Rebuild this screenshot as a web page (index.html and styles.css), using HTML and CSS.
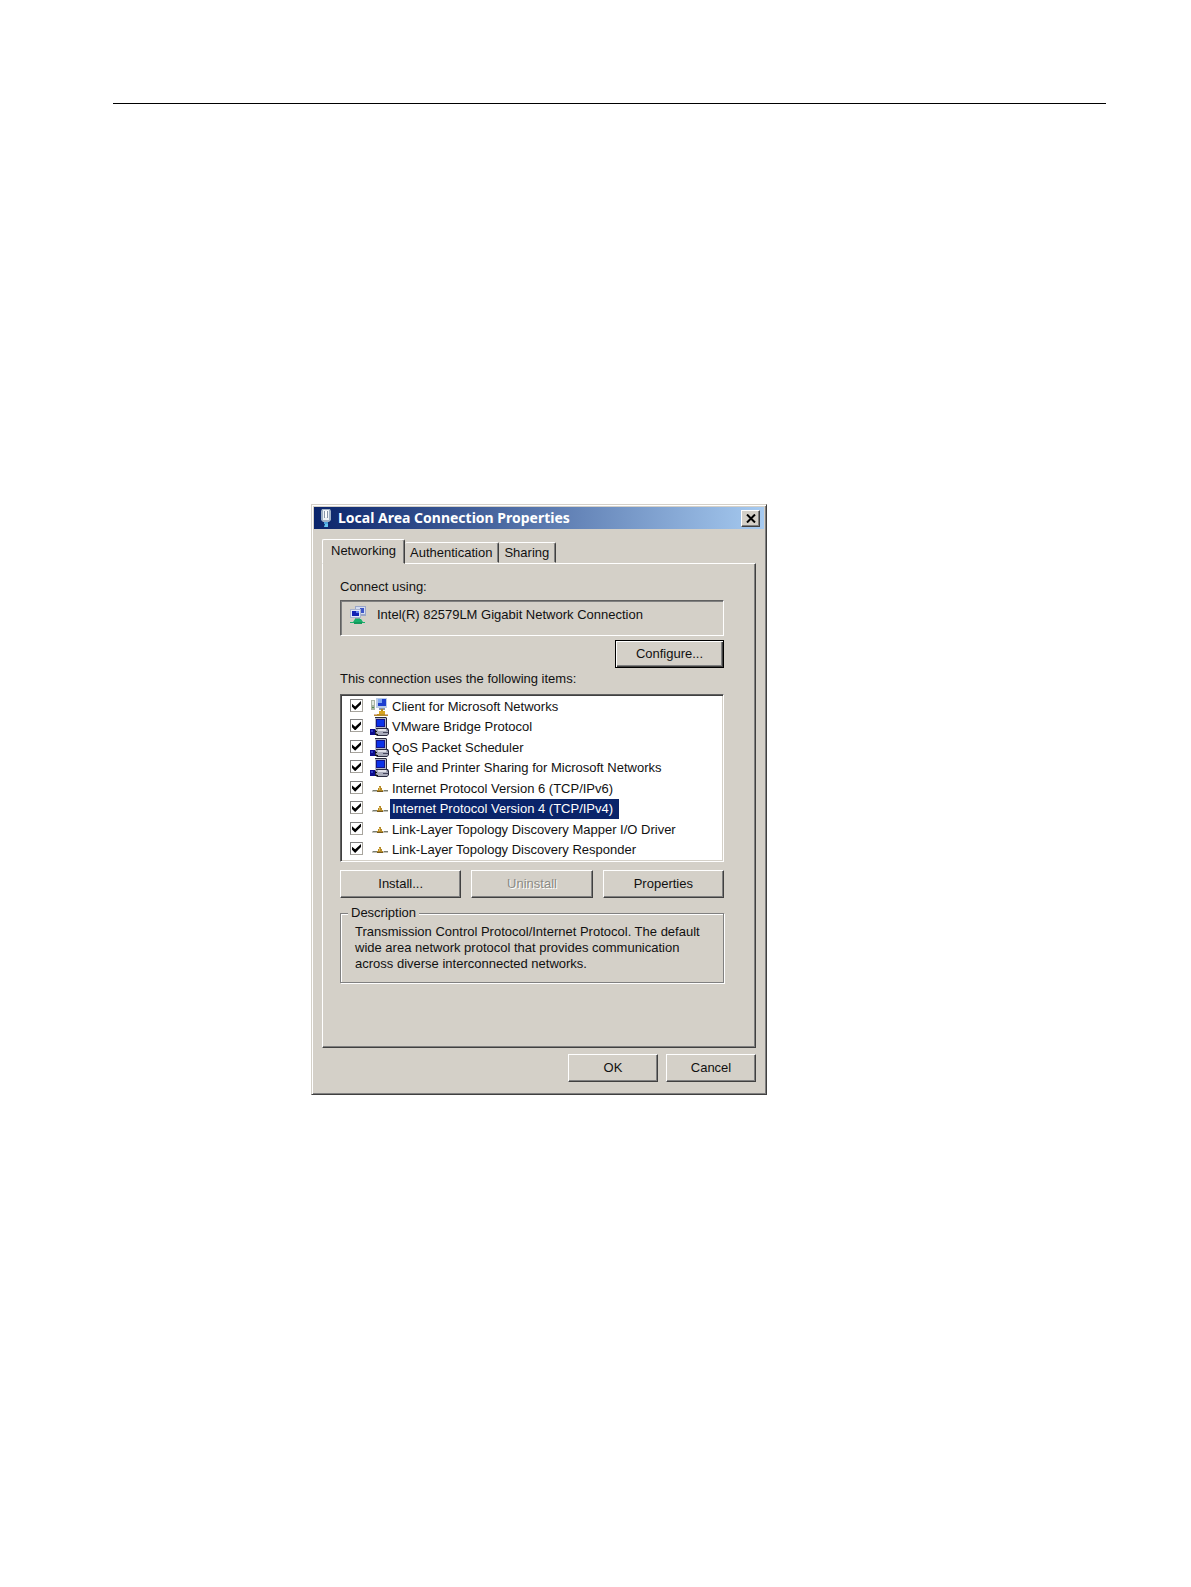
FILE: index.html
```html
<!DOCTYPE html>
<html lang="en">
<head>
    <meta charset="UTF-8">
    <meta name="viewport" content="width=device-width, initial-scale=1.0">
    <title>Local Area Connection Properties</title>
    <link rel="stylesheet" href="styles.css">
</head>
<body>

    <!-- Shared icons -->
    <svg class="sprite" aria-hidden="true">
        <symbol id="icon-client" viewBox="0 0 20 20">
            <path d="M1 3h4v10H1z" fill="#a9b5a6"/>
            <path d="M2 4h2v4H2z" fill="#dfe7dc"/>
            <path d="M2 10h2v1H2z" fill="#4f8a4a"/>
            <path d="M6 1h11v10H6z" fill="#b9cbe6"/>
            <path d="M8 2h8v7H8z" fill="#1d3fd0"/>
            <path d="M8 2h4v4H8z" fill="#7fa6f2"/>
            <path d="M9 11h6v2H9z" fill="#8f98a8"/>
            <path d="M11 12h2v3h-2z" fill="#b08a1e"/>
            <path d="M9 14h6v3H9z" fill="#d9a520"/>
            <path d="M4 17h14v2H4z" fill="#b98f2c"/>
            <path d="M4 17h3v1H4zM15 17h3v1h-3z" fill="#d8b0a0"/>
        </symbol>
        <symbol id="icon-service" viewBox="0 0 20 20">
            <path d="M5 0h11l1 1v10h1l1 2v4l-2 2H7l-2-2v-4l1-1-1-2z" fill="#2b2b40"/>
            <path d="M5 1h11v10H5z" fill="#b4b8c6"/>
            <path d="M6 2h9v8H6z" fill="#15158a"/>
            <path d="M7 3h7v6H7z" fill="#0b32e8"/>
            <path d="M6 12h11l1 2v3l-1 1H8l-2-2z" fill="#a9abba"/>
            <path d="M8 12h8v2H8z" fill="#e2e2ea"/>
            <path d="M13 15h5v1h-5z" fill="#44445c"/>
            <path d="M0 12h5v6H0z" fill="#0c0c8c"/>
            <path d="M1 13h2v2H1z" fill="#3340c8"/>
            <path d="M5 14h2v1H5zM5 17h3v1H5z" fill="#111"/>
        </symbol>
        <symbol id="icon-protocol" viewBox="0 0 20 20">
            <path d="M2 11h16v2H2z" fill="#c3c4bd"/>
            <path d="M3 11h4v1H3zM14 11h4v1h-4z" fill="#777b70"/>
            <path d="M9 7h2v2h1v2h1v2H7v-2h1V9h1z" fill="#b58a28"/>
            <path d="M9 8h1v3H9z" fill="#e2bb55"/>
            <path d="M7 12h6v1H7z" fill="#75571a"/>
        </symbol>
    </svg>

    <main class="page">
        <hr class="rule">

        <section class="dialog" role="dialog" aria-labelledby="dialog-title">
            <header class="titlebar">
                <svg class="title-icon" viewBox="0 0 12 20" aria-hidden="true">
                    <path d="M2 1h8l1 2v9l-2 2H3l-2-2V3z" fill="#9fb0c4"/>
                    <path d="M3 2h6v10H3z" fill="#eef2f6"/>
                    <path d="M4 3h1v7H4zM7 3h1v7H7z" fill="#8795a8"/>
                    <path d="M5 3h2v6H5z" fill="#fff"/>
                    <path d="M4 14h4v2H4z" fill="#4ba3dc"/>
                    <path d="M5 16h3v3H4z" fill="#62c4f0"/>
                </svg>
                <h1 class="title" id="dialog-title">Local Area Connection Properties</h1>
                <button type="button" class="btn close" aria-label="Close">
                    <svg viewBox="0 0 10 9" aria-hidden="true">
                        <path d="M1 0.5L9 8.5M9 0.5L1 8.5" stroke="#000" stroke-width="2" fill="none"/>
                    </svg>
                </button>
            </header>

            <div class="content">
                <div class="tabs" role="tablist">
                    <button type="button" class="tab active" role="tab" aria-selected="true">Networking</button>
                    <button type="button" class="tab" role="tab" aria-selected="false">Authentication</button>
                    <button type="button" class="tab" role="tab" aria-selected="false">Sharing</button>
                </div>

                <div class="panel" role="tabpanel">
                    <p class="label">Connect using:</p>
                    <div class="adapter">
                        <svg class="adapter-icon" viewBox="0 0 18 20" aria-hidden="true">
                            <path d="M6 1h11v10H6z" fill="#9aa6c8"/>
                            <path d="M7 2h9v7H7z" fill="#d3dcf2"/>
                            <path d="M11 3h4v5h-4z" fill="#3c55c8"/>
                            <path d="M1 4h11v9H1z" fill="#a9b3cf"/>
                            <path d="M2 5h9v7H2z" fill="#e3e9f7"/>
                            <path d="M3 6h7v5H3z" fill="#1322b4"/>
                            <path d="M7 6h3v2H7z" fill="#6484ee"/>
                            <path d="M6 13h5v2H6z" fill="#6fa79a"/>
                            <path d="M6 14h6l2 3h2v1H1v-1h3z" fill="#18b06c"/>
                            <path d="M5 17h8v2H5z" fill="#139a5c"/>
                        </svg>
                        <span>Intel(R) 82579LM Gigabit Network Connection</span>
                    </div>
                    <button type="button" class="btn configure">Configure...</button>

                    <p class="label">This connection uses the following items:</p>
                    <ul class="items">
                        <li><input type="checkbox" id="item1" checked><label for="item1"><svg><use href="#icon-client"/></svg><span>Client for Microsoft Networks</span></label></li>
                        <li><input type="checkbox" id="item2" checked><label for="item2"><svg><use href="#icon-service"/></svg><span>VMware Bridge Protocol</span></label></li>
                        <li><input type="checkbox" id="item3" checked><label for="item3"><svg><use href="#icon-service"/></svg><span>QoS Packet Scheduler</span></label></li>
                        <li><input type="checkbox" id="item4" checked><label for="item4"><svg><use href="#icon-service"/></svg><span>File and Printer Sharing for Microsoft Networks</span></label></li>
                        <li><input type="checkbox" id="item5" checked><label for="item5"><svg><use href="#icon-protocol"/></svg><span>Internet Protocol Version 6 (TCP/IPv6)</span></label></li>
                        <li class="selected"><input type="checkbox" id="item6" checked><label for="item6"><svg><use href="#icon-protocol"/></svg><span>Internet Protocol Version 4 (TCP/IPv4)</span></label></li>
                        <li><input type="checkbox" id="item7" checked><label for="item7"><svg><use href="#icon-protocol"/></svg><span>Link-Layer Topology Discovery Mapper I/O Driver</span></label></li>
                        <li><input type="checkbox" id="item8" checked><label for="item8"><svg><use href="#icon-protocol"/></svg><span>Link-Layer Topology Discovery Responder</span></label></li>
                    </ul>

                    <div class="actions">
                        <button type="button" class="btn">Install...</button>
                        <button type="button" class="btn" disabled>Uninstall</button>
                        <button type="button" class="btn">Properties</button>
                    </div>

                    <fieldset class="description">
                        <legend>Description</legend>
                        <p>Transmission Control Protocol/Internet Protocol. The default wide area network protocol that provides communication across diverse interconnected networks.</p>
                    </fieldset>
                </div>

                <footer class="footer">
                    <button type="button" class="btn">OK</button>
                    <button type="button" class="btn">Cancel</button>
                </footer>
            </div>
        </section>
    </main>

</body>
</html>
```
FILE: styles.css
```css
* {
    box-sizing: border-box;
}

body {
    margin: 0;
    background: #fff;
    color: #111;
    font-family: "Liberation Sans", Arial, sans-serif;
    font-size: 13px;
    line-height: 16px;
}

p, h1, ul {
    margin: 0;
    padding: 0;
}

button {
    font: inherit;
    color: inherit;
}

.sprite {
    display: none;
}

.page {
    padding: 103px 85px 80px 113px;
}

.rule {
    margin: 0 0 400px;
    border: 0;
    border-top: 1px solid #000;
}

/* Dialog window */
.dialog {
    max-width: 456px;
    margin-left: 198px;
    padding: 2px;
    background: #d4d0c8;
    border: 1px solid;
    border-color: #d4d0c8 #404040 #404040 #d4d0c8;
    box-shadow: inset 1px 1px #fff, inset -1px -1px #808080;
}

.titlebar {
    display: flex;
    align-items: center;
    gap: 6px;
    height: 22px;
    padding: 0 4px 0 6px;
    background: linear-gradient(to right, #0a246a, #a6caf0);
}

.title-icon {
    width: 12px;
    height: 20px;
}

.title {
    flex: 1;
    color: #fff;
    font-family: "Noto Sans", Tahoma, sans-serif;
    font-size: 14px;
    font-weight: bold;
}

.content {
    padding: 10px 8px 10px 8px;
}

/* Buttons */
.btn {
    height: 28px;
    padding: 0;
    background: #d4d0c8;
    border: 1px solid;
    border-color: #fff #404040 #404040 #fff;
    box-shadow: inset -1px -1px #808080;
}

.btn:disabled {
    color: #8c8a84;
    text-shadow: 1px 1px #fff;
}

.close {
    display: flex;
    align-items: center;
    justify-content: center;
    width: 19px;
    height: 17px;
}

.close svg {
    width: 10px;
    height: 9px;
}

.configure {
    align-self: flex-end;
    width: 109px;
    margin: 4px 0 3px;
    border-color: #000;
    box-shadow: inset 1px 1px #fff, inset -1px -1px #404040, inset -2px -2px #808080;
}

/* Tabs */
.tabs {
    display: flex;
    align-items: flex-end;
}

.tab {
    height: 21px;
    padding: 0 6px 0 5px;
    background: #d4d0c8;
    border: 1px solid;
    border-color: #fff #404040 transparent #fff;
    border-left: 0;
    border-radius: 2px 2px 0 0;
    box-shadow: inset -1px 0 #808080;
}

.tab.active {
    z-index: 1;
    height: 25px;
    margin-bottom: -1px;
    padding: 0 8px 2px;
    border-left: 1px solid #fff;
    border-bottom-color: #d4d0c8;
}

.panel {
    display: flex;
    flex-direction: column;
    min-height: 485px;
    padding: 15px 31px 20px 17px;
    border: 1px solid;
    border-color: #fff #404040 #404040 #fff;
    box-shadow: inset -1px -1px #808080;
}

.adapter {
    display: flex;
    align-items: center;
    gap: 10px;
    height: 36px;
    margin-top: 5px;
    padding: 0 8px 6px;
    border: 1px solid;
    border-color: #606060 #fff #fff #606060;
    box-shadow: inset 1px 1px #808080;
}

.adapter-icon {
    width: 18px;
    height: 20px;
}

/* List of connection items */
.items {
    display: flex;
    flex-direction: column;
    justify-content: space-between;
    min-height: 168px;
    margin-top: 7px;
    padding: 2px 9px 1px;
    list-style: none;
    background: #fff;
    border: 1px solid;
    border-color: #606060 #fff #fff #606060;
    box-shadow: inset 1px 1px #404040, inset -1px -1px #d4d0c8;
}

.items li,
.items label {
    display: flex;
    align-items: center;
}

.items li {
    gap: 7px;
}

.items svg {
    width: 20px;
    height: 20px;
}

.items span {
    padding: 2px 6px 2px 2px;
}

.items .selected span {
    background: #0a246a;
    color: #fff;
}

.items input {
    appearance: none;
    width: 13px;
    height: 13px;
    margin: 0 0 3px;
    background: #fff;
    border: 1px solid;
    border-color: #808080 #a8a59e #a8a59e #808080;
}

.items input:checked::before {
    content: "";
    display: block;
    width: 9px;
    height: 9px;
    margin: 1px;
    background: #000;
    clip-path: polygon(0 30%, 35% 60%, 100% 0, 100% 35%, 35% 100%, 0 65%);
}

.actions {
    display: grid;
    grid-template-columns: repeat(3, 1fr);
    gap: 10px;
    margin-top: 8px;
}

/* Description group box */
.description {
    margin: 7px 0 0;
    padding: 3px 14px 10px;
    border: 1px solid #808080;
    box-shadow: 1px 1px #fff, inset 1px 1px #fff;
}

.description legend {
    margin-left: -7px;
    padding: 0 3px;
    background: #d4d0c8;
}

.footer {
    display: flex;
    justify-content: flex-end;
    gap: 8px;
    margin-top: 6px;
}

.footer .btn {
    width: 90px;
}
```
